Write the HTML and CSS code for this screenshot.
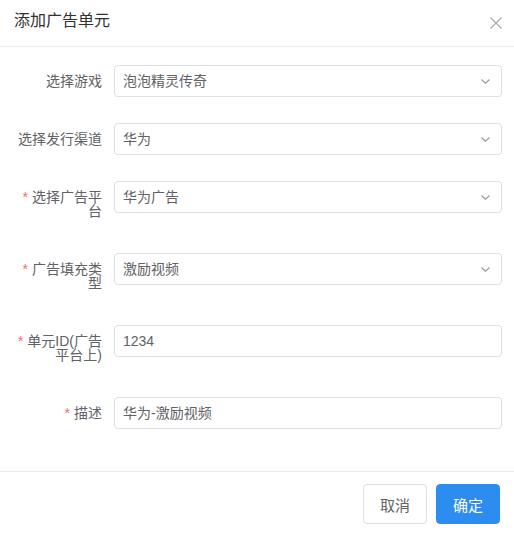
FILE: index.html
```html
<!DOCTYPE html>
<html lang="zh">
<head>
<meta charset="utf-8">
<link rel="stylesheet" href="styles.css">
</head>
<body>
<div class="dialog">
  <div class="header">
    <span class="title">添加广告单元</span>
    <svg class="close" width="12" height="12" viewBox="0 0 12 12"><path d="M0.5 0.5L11.5 11.5M11.5 0.5L0.5 11.5" stroke="#a8abb2" stroke-width="1.2" fill="none"/></svg>
  </div>
  <div class="body">
    <div class="item">
      <label class="label">选择游戏</label>
      <div class="input select"><span>泡泡精灵传奇</span><svg class="arrow" width="9" height="5" viewBox="0 0 9 5"><path d="M0.5 0.5L4.5 4.3L8.5 0.5" stroke="#9a9ea8" stroke-width="1.2" fill="none"/></svg></div>
    </div>
    <div class="item">
      <label class="label">选择发行渠道</label>
      <div class="input select"><span>华为</span><svg class="arrow" width="9" height="5" viewBox="0 0 9 5"><path d="M0.5 0.5L4.5 4.3L8.5 0.5" stroke="#9a9ea8" stroke-width="1.2" fill="none"/></svg></div>
    </div>
    <div class="item">
      <label class="label"><span class="req">*</span>选择广告平台</label>
      <div class="input select"><span>华为广告</span><svg class="arrow" width="9" height="5" viewBox="0 0 9 5"><path d="M0.5 0.5L4.5 4.3L8.5 0.5" stroke="#9a9ea8" stroke-width="1.2" fill="none"/></svg></div>
    </div>
    <div class="item">
      <label class="label"><span class="req">*</span>广告填充类型</label>
      <div class="input select"><span>激励视频</span><svg class="arrow" width="9" height="5" viewBox="0 0 9 5"><path d="M0.5 0.5L4.5 4.3L8.5 0.5" stroke="#9a9ea8" stroke-width="1.2" fill="none"/></svg></div>
    </div>
    <div class="item">
      <label class="label"><span class="req">*</span>单元ID(广告平台上)</label>
      <div class="input"><span>1234</span></div>
    </div>
    <div class="item">
      <label class="label"><span class="req">*</span>描述</label>
      <div class="input"><span>华为-激励视频</span></div>
    </div>
  </div>
  <div class="footer">
    <button class="btn">取消</button>
    <button class="btn primary">确定</button>
  </div>
</div>
</body>
</html>
```
FILE: styles.css
```css
* { box-sizing: border-box; }
html, body { margin: 0; padding: 0; background: #fff; }
body {
  font-family: "Liberation Sans", "Noto Sans CJK SC", sans-serif;
  width: 514px;
  height: 533px;
  overflow: hidden;
}
.dialog { width: 514px; }
.header {
  height: 47px;
  border-bottom: 1px solid #e8eaec;
  display: flex;
  align-items: center;
  justify-content: space-between;
  padding: 0 12px 4px 14px;
}
.title { font-size: 16px; color: #303133; line-height: 20px; }
.close { display: block; margin-top: 3px; }
.body { padding: 18px 12px 16px 0; }
.item { display: flex; margin-bottom: 26px; }
.label {
  width: 114px;
  flex: none;
  padding: 9px 12px 9px 14px;
  text-align: right;
  font-size: 14px;
  line-height: 14px;
  color: #606266;
}
.req { color: #f56c6c; margin-right: 4px; }
.input {
  flex: 1;
  height: 32px;
  border: 1px solid #dcdfe6;
  border-radius: 4px;
  display: flex;
  align-items: center;
  justify-content: space-between;
  padding: 0 11px 0 8px;
  font-size: 14px;
  color: #606266;
}
.input span { line-height: 30px; }
.arrow { display: block; }
.footer {
  border-top: 1px solid #e8eaec;
  display: flex;
  justify-content: flex-end;
  gap: 9px;
  padding: 12px 14px 0 0;
}
.btn {
  font-family: "Liberation Sans", "Noto Sans CJK SC", sans-serif;
  height: 40px;
  width: 64px;
  font-size: 15px;
  border-radius: 4px;
  border: 1px solid #dcdfe6;
  background: #fff;
  color: #606266;
  padding: 0;
}
.btn.primary { background: #2d8cf0; border-color: #2d8cf0; color: #fff; }
```
